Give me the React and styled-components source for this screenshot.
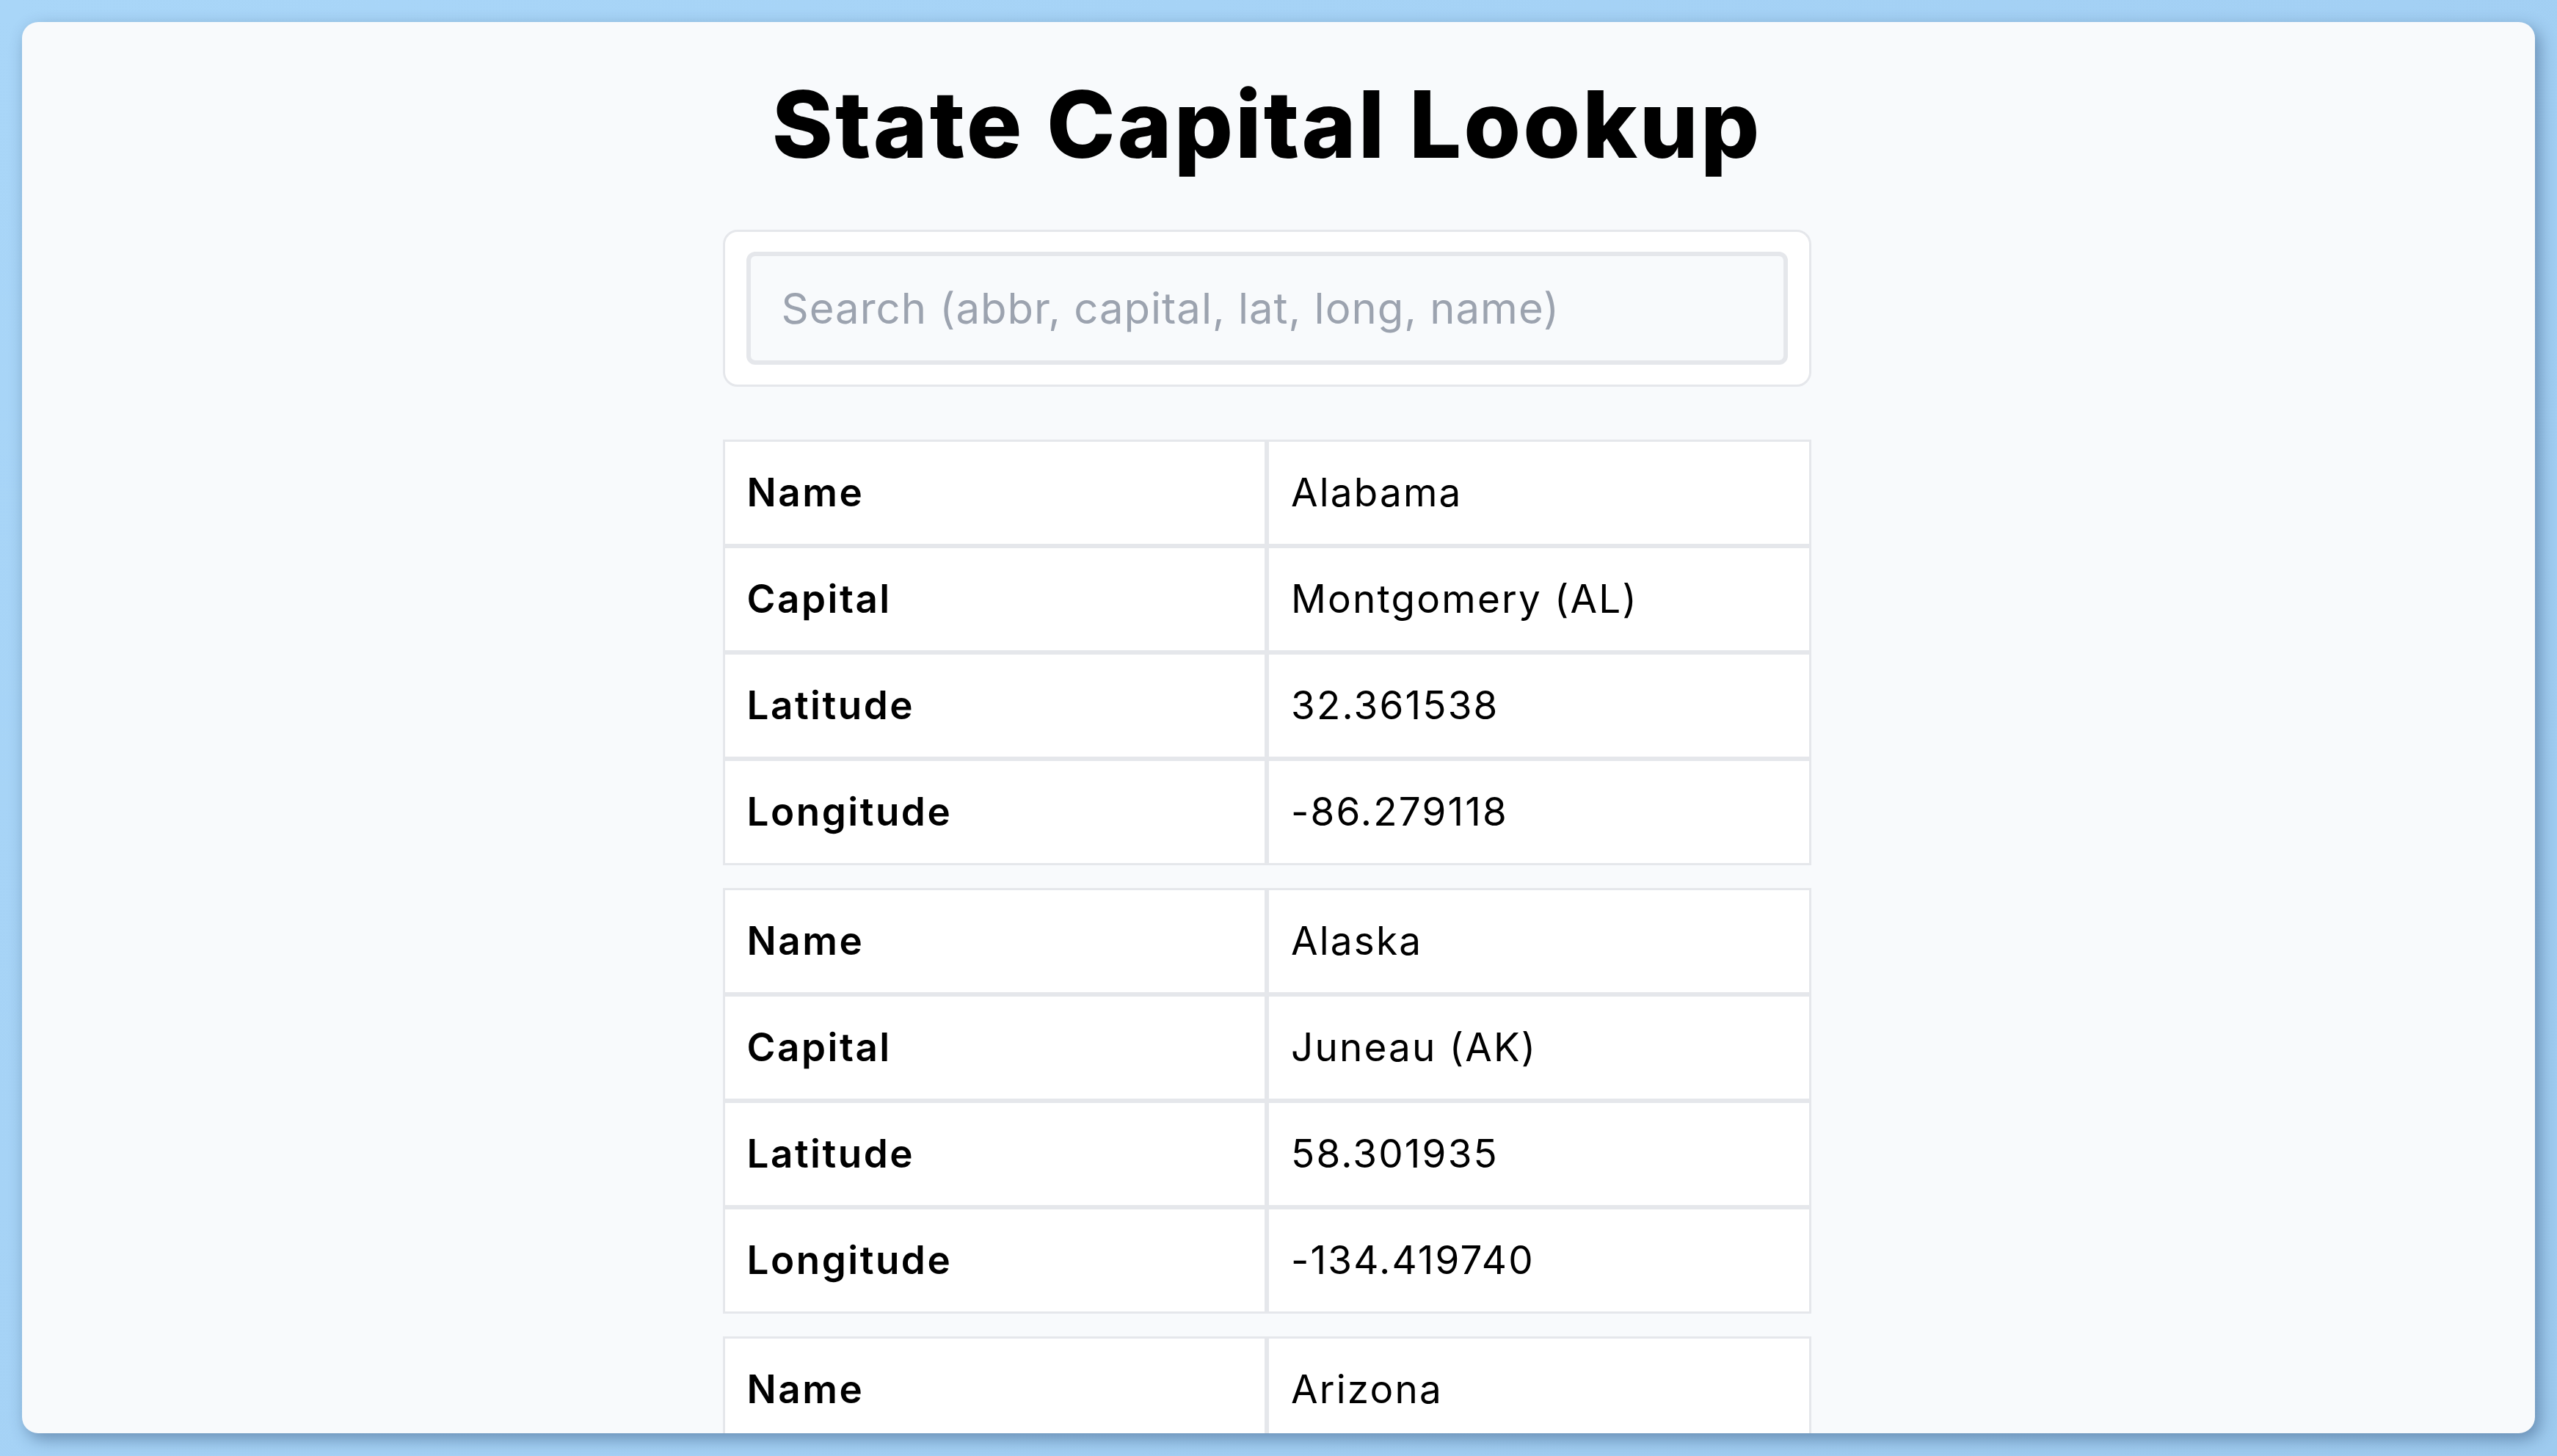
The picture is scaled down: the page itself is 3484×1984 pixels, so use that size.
import React, { useState } from "react";
import styled, { createGlobalStyle } from "styled-components";

const GlobalStyle = createGlobalStyle`
  html, body {
    margin: 0;
    padding: 0;
    height: 100%;
  }
  body {
    background: linear-gradient(135deg, #a9d6f8 0%, #a3d0f4 60%, #9ecbef 100%);
    font-family: Inter, "Noto Sans", "Liberation Sans", sans-serif;
    overflow: hidden;
  }
`;

const Page = styled.div`
  box-sizing: border-box;
  height: 100vh;
  padding: 30px 30px 31px 30px;
  display: flex;
`;

const Card = styled.div`
  flex: 1;
  background: #f8fafc;
  border-radius: 22px;
  box-shadow: 6px 8px 22px rgba(30, 60, 100, 0.45);
  overflow: hidden;
  display: flex;
  justify-content: center;
  padding: 64px 32px 0 0;
`;

const Content = styled.div`
  width: 1483px;
  display: flex;
  flex-direction: column;
  align-items: stretch;
`;

const Title = styled.h1`
  margin: 0 0 68px 0;
  text-align: center;
  font-size: 126px;
  line-height: 1.2;
  font-weight: 800;
  color: #000;
  letter-spacing: 3px;
  white-space: nowrap;
`;

const SearchBox = styled.div`
  background: #fff;
  border: 3px solid #e5e7eb;
  border-radius: 20px;
  padding: 27px 29px;
  margin-bottom: 72px;
`;

const SearchInput = styled.input`
  box-sizing: border-box;
  width: 100%;
  height: 154px;
  border: 6px solid #e5e7eb;
  border-radius: 12px;
  background: #f8fafc;
  padding: 0 42px;
  font-family: inherit;
  font-size: 58px;
  letter-spacing: 1px;
  color: #111;
  outline: none;
  &::placeholder {
    color: #9ca3af;
  }
`;

const StateTable = styled.table`
  width: 100%;
  border-collapse: separate;
  border-spacing: 0;
  table-layout: fixed;
  background: #fff;
  margin-bottom: 31px;
`;

const Cell = styled.td`
  border: 3px solid #e5e7eb;
  padding: 29px 30px;
  font-size: 53px;
  line-height: 81px;
  color: #000;
  font-weight: ${(p) => (p.$label ? 600 : 400)};
  letter-spacing: ${(p) => (p.$label ? "2.5px" : "2.2px")};
  white-space: nowrap;
`;

const states = [
  { name: "Alabama", abbr: "AL", capital: "Montgomery", lat: "32.361538", long: "-86.279118" },
  { name: "Alaska", abbr: "AK", capital: "Juneau", lat: "58.301935", long: "-134.419740" },
  { name: "Arizona", abbr: "AZ", capital: "Phoenix", lat: "33.448457", long: "-112.073844" },
  { name: "Arkansas", abbr: "AR", capital: "Little Rock", lat: "34.736009", long: "-92.331122" },
];

function StateRows({ state }) {
  const rows = [
    ["Name", state.name],
    ["Capital", `${state.capital} (${state.abbr})`],
    ["Latitude", state.lat],
    ["Longitude", state.long],
  ];
  return (
    <StateTable>
      <tbody>
        {rows.map(([label, value]) => (
          <tr key={label}>
            <Cell $label>{label}</Cell>
            <Cell>{value}</Cell>
          </tr>
        ))}
      </tbody>
    </StateTable>
  );
}

export default function App() {
  const [query, setQuery] = useState("");

  const q = query.trim().toLowerCase();
  const filtered = states.filter(
    (s) =>
      !q ||
      [s.abbr, s.capital, s.lat, s.long, s.name].some((v) =>
        v.toLowerCase().includes(q)
      )
  );

  return (
    <>
      <GlobalStyle />
      <Page>
        <Card>
          <Content>
            <Title>State Capital Lookup</Title>
            <SearchBox>
              <SearchInput
                value={query}
                onChange={(e) => setQuery(e.target.value)}
                placeholder="Search (abbr, capital, lat, long, name)"
              />
            </SearchBox>
            {filtered.map((s) => (
              <StateRows key={s.abbr} state={s} />
            ))}
          </Content>
        </Card>
      </Page>
    </>
  );
}
